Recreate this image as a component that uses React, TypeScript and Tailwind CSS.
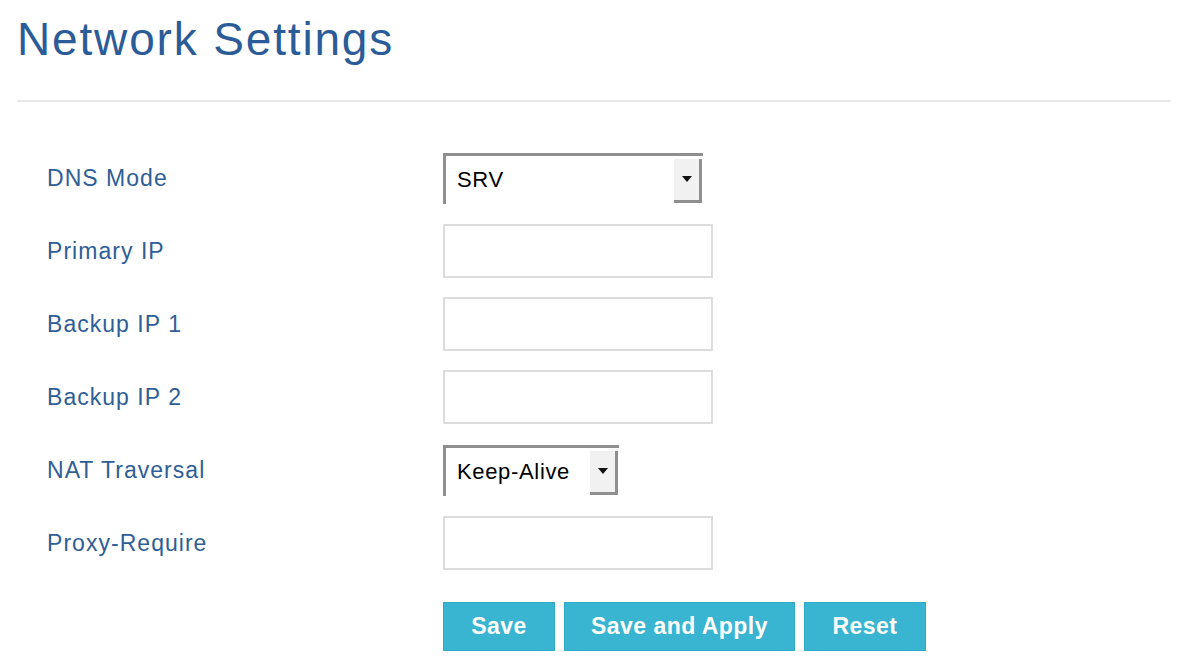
import React from "react";

const labelCls =
  "w-[396px] flex items-center text-[23px] tracking-[0.045em] text-[#2f5e96]";

function TextInput() {
  return <div className="w-[270px] h-[54px] border-2 border-[#dcdcdc] bg-white" />;
}

function Select({ value, width }: { value: string; width: string }) {
  return (
    <div className={`${width} h-[51px] flex border-t-[3px] border-l-[3px] border-[#8f8f8f] bg-white`}>
      <div className="flex-1 flex items-center pl-[11px] text-[22px] tracking-[0.03em] text-black">
        {value}
      </div>
      <div className="w-[28px] mt-[3px] mb-[1px] mr-[1px] bg-[#f1f1f1] border-r-[3px] border-b-[3px] border-[#8f8f8f] flex items-center justify-center">
        <svg width="10" height="6" viewBox="0 0 10 6">
          <path d="M0 0 H10 L5 6 Z" fill="#111" />
        </svg>
      </div>
    </div>
  );
}

function Row({ label, children }: { label: string; children: React.ReactNode }) {
  return (
    <div className="flex h-[54px] items-center">
      <div className={labelCls}>{label}</div>
      {children}
    </div>
  );
}

function Btn({ label, width }: { label: string; width: string }) {
  return (
    <button
      className={`${width} h-[49px] bg-[#39b4d1] border border-[#2ea9c8] text-white font-bold text-[23px] tracking-[0.02em] flex items-center justify-center`}
    >
      {label}
    </button>
  );
}

export default function App() {
  return (
    <div className="w-[1200px] h-[665px] bg-white overflow-hidden font-['Liberation_Sans',Arial,Helvetica,sans-serif]">
      <div className="pl-[17px] pr-[29px]">
        <h1 className="pt-[17px] text-[46px] leading-[45px] tracking-[0.04em] text-[#2b5c97] h-[100px]">
          Network Settings
        </h1>
        <div className="h-[2px] bg-[#e8e8e8]" />
      </div>
      <div className="pl-[47px] pt-[49px] flex flex-col gap-[19px]">
        <Row label="DNS Mode">
          <Select value="SRV" width="w-[260px]" />
        </Row>
        <Row label="Primary IP">
          <TextInput />
        </Row>
        <Row label="Backup IP 1">
          <TextInput />
        </Row>
        <Row label="Backup IP 2">
          <TextInput />
        </Row>
        <Row label="NAT Traversal">
          <Select value="Keep-Alive" width="w-[176px]" />
        </Row>
        <Row label="Proxy-Require">
          <TextInput />
        </Row>
      </div>
      <div className="pl-[443px] mt-[32px] flex gap-[9px]">
        <Btn label="Save" width="w-[112px]" />
        <Btn label="Save and Apply" width="w-[231px]" />
        <Btn label="Reset" width="w-[122px]" />
      </div>
    </div>
  );
}
